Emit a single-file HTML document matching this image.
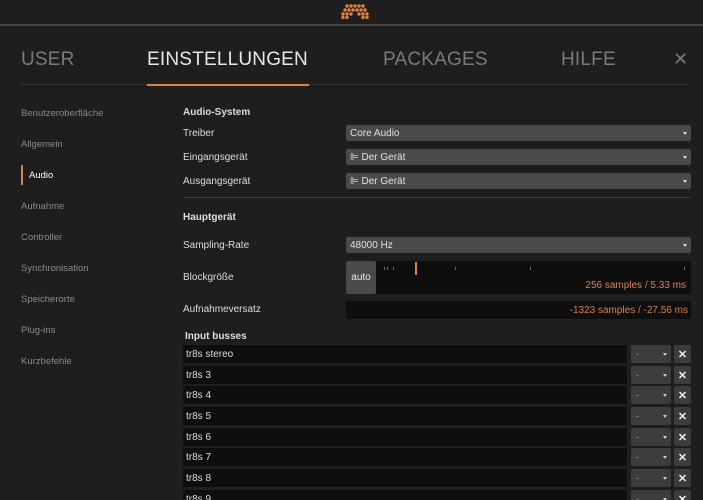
<!DOCTYPE html>
<html><head><meta charset="utf-8"><style>
*{margin:0;padding:0;box-sizing:border-box}
html,body{width:703px;height:500px;overflow:hidden}
body{background:#1e1e1e;font-family:"Liberation Sans",sans-serif;position:relative;color:#ccc}
.a{position:absolute}
.tab{position:absolute;top:49px;font-size:19px;color:#7a7a7a;letter-spacing:0.2px}
.nav{position:absolute;left:21px;font-size:9.5px;color:#8a8a8a}
.lbl{position:absolute;left:183px;font-size:10px;color:#ddd}
.dd{position:absolute;left:346px;width:345px;height:16px;display:flex;align-items:center;background:#4a4a4a;border-radius:2px;font-size:10px;color:#e0e0e0;padding:0 0 0 4px}
.dd:after{content:"";position:absolute;right:4px;top:7px;border:2px solid transparent;border-top:3px solid #ddd}
.row{position:absolute;left:183px;width:444px;height:18px;display:flex;align-items:center;background:#0e0e0e;font-size:10px;color:#ddd;padding:0 0 0 3px}
.sel{position:absolute;left:631px;width:40px;height:18px;display:flex;align-items:center;background:#3c3c3c;border-radius:2px;font-size:9px;color:#999;padding:0 0 0 5px}
.sel:after{content:"";position:absolute;right:4px;top:8px;border:2px solid transparent;border-top:3px solid #ccc}
.x{position:absolute;left:674px;width:17px;height:18px;background:#3c3c3c;border-radius:2px;font-size:11px;color:#eee;display:flex;align-items:center;justify-content:center;font-weight:bold}
</style></head><body>
<svg class="a" style="left:340px;top:3px" width="30" height="16">
<g fill="#d9843f">
<circle cx="7" cy="3" r="1.7"/><circle cx="11" cy="3" r="1.7"/><circle cx="15" cy="3" r="1.7"/><circle cx="19" cy="3" r="1.7"/><circle cx="23" cy="3" r="1.7"/>
<circle cx="5" cy="7" r="1.7"/><circle cx="9" cy="7" r="1.7"/><circle cx="13" cy="7" r="1.7"/><circle cx="17" cy="7" r="1.7"/><circle cx="21" cy="7" r="1.7"/><circle cx="25" cy="7" r="1.7"/>
<circle cx="3" cy="11" r="1.7"/><circle cx="7" cy="11" r="1.7"/><circle cx="11" cy="11" r="1.7"/><circle cx="19" cy="11" r="1.7"/><circle cx="23" cy="11" r="1.7"/><circle cx="27" cy="11" r="1.7"/>
<circle cx="3" cy="14.5" r="1.7"/><circle cx="7" cy="14.5" r="1.7"/><circle cx="23" cy="14.5" r="1.7"/><circle cx="27" cy="14.5" r="1.7"/>
</g></svg>
<div class="a" style="left:0;top:24px;width:703px;height:2px;background:#464646"></div>
<div class="tab" style="left:21px">USER</div>
<div class="tab" style="left:147px;color:#e8e8e8">EINSTELLUNGEN</div>
<div class="tab" style="left:383px">PACKAGES</div>
<div class="tab" style="left:561px">HILFE</div>
<div class="tab" style="left:673px;font-size:18px">✕</div>
<div class="a" style="left:21px;top:84px;width:667px;height:1px;background:#3a3a3a"></div>
<div class="a" style="left:147px;top:84px;width:162px;height:2px;background:#d9843f"></div>
<div class="nav" style="top:108px">Benutzeroberfläche</div>
<div class="nav" style="top:139px">Allgemein</div>
<div class="a" style="left:21px;top:165px;width:2px;height:20px;background:#d9843f"></div>
<div class="nav" style="top:170px;left:29px;color:#fff">Audio</div>
<div class="nav" style="top:201px">Aufnahme</div>
<div class="nav" style="top:232px">Controller</div>
<div class="nav" style="top:263px">Synchronisation</div>
<div class="nav" style="top:294px">Speicherorte</div>
<div class="nav" style="top:325px">Plug-ins</div>
<div class="nav" style="top:356px">Kurzbefehle</div>

<div class="lbl" style="top:107px;font-weight:bold">Audio-System</div>
<div class="lbl" style="top:128px">Treiber</div>
<div class="lbl" style="top:152px">Eingangsgerät</div>
<div class="lbl" style="top:176px">Ausgangsgerät</div>
<div class="dd" style="top:125px">Core Audio</div>
<div class="dd" style="top:149px">⊫ Der Gerät</div>
<div class="dd" style="top:173px">⊫ Der Gerät</div>
<div class="a" style="left:183px;top:197px;width:508px;height:1px;background:#3a3a3a"></div>
<div class="lbl" style="top:212px;font-weight:bold">Hauptgerät</div>
<div class="lbl" style="top:240px">Sampling-Rate</div>
<div class="dd" style="top:237px">48000 Hz</div>
<div class="lbl" style="top:272px">Blockgröße</div>
<div class="a" style="left:346px;top:261px;width:345px;height:33px;background:#0e0e0e;border-radius:2px"></div>
<div class="a" style="left:346px;top:261px;width:30px;height:33px;background:#4a4a4a;border-radius:2px;font-size:10px;color:#eee;display:flex;align-items:center;justify-content:center">auto</div>
<div class="a" style="left:415px;top:262px;width:2px;height:13px;background:#d9843f"></div>
<div class="a" style="left:384px;top:267px;width:1px;height:3px;background:#666"></div>
<div class="a" style="left:387px;top:267px;width:1px;height:3px;background:#666"></div>
<div class="a" style="left:393px;top:267px;width:1px;height:3px;background:#666"></div>
<div class="a" style="left:455px;top:267px;width:1px;height:3px;background:#666"></div>
<div class="a" style="left:530px;top:267px;width:1px;height:3px;background:#666"></div>
<div class="a" style="left:684px;top:267px;width:1px;height:3px;background:#666"></div>
<div class="a" style="left:500px;top:280px;width:186px;text-align:right;font-size:10px;color:#d9843f">256 samples / 5.33 ms</div>
<div class="lbl" style="top:304px">Aufnahmeversatz</div>
<div class="a" style="left:346px;top:301px;width:345px;height:18px;display:flex;align-items:center;justify-content:flex-end;background:#0e0e0e;border-radius:2px;font-size:10px;color:#d9843f;padding:0 3px 0 0">-1323 samples / -27.56 ms</div>
<div class="lbl" style="top:331px;left:185px;font-weight:bold">Input busses</div>

<div class="row" style="top:345px">tr8s stereo</div><div class="sel" style="top:345px">-</div><div class="x" style="top:345px">✕</div>
<div class="row" style="top:366px">tr8s 3</div><div class="sel" style="top:366px">-</div><div class="x" style="top:366px">✕</div>
<div class="row" style="top:386px">tr8s 4</div><div class="sel" style="top:386px">-</div><div class="x" style="top:386px">✕</div>
<div class="row" style="top:407px">tr8s 5</div><div class="sel" style="top:407px">-</div><div class="x" style="top:407px">✕</div>
<div class="row" style="top:428px">tr8s 6</div><div class="sel" style="top:428px">-</div><div class="x" style="top:428px">✕</div>
<div class="row" style="top:448px">tr8s 7</div><div class="sel" style="top:448px">-</div><div class="x" style="top:448px">✕</div>
<div class="row" style="top:469px">tr8s 8</div><div class="sel" style="top:469px">-</div><div class="x" style="top:469px">✕</div>
<div class="row" style="top:490px">tr8s 9</div><div class="sel" style="top:490px">-</div><div class="x" style="top:490px">✕</div>
</body></html>
